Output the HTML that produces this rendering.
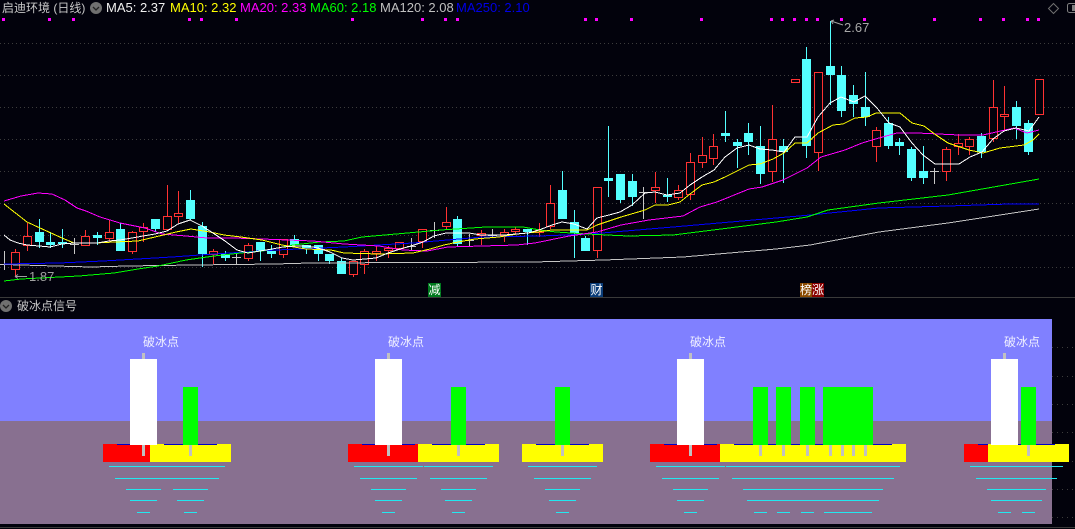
<!DOCTYPE html>
<html lang="zh">
<head>
<meta charset="utf-8">
<style>
html,body{margin:0;padding:0;width:1075px;height:529px;overflow:hidden;background:#02020c}
svg{display:block;position:absolute;left:0;top:0}
text{font-family:"Liberation Sans","Noto Sans CJK SC",sans-serif}
</style>
</head>
<body>
<svg width="1075" height="529" viewBox="0 0 1075 529" xmlns="http://www.w3.org/2000/svg">
<rect width="1075" height="529" fill="#02020c"/>

<!-- grid -->
<path d="M0 43.5H1075M0 75.5H1075M0 107.5H1075M0 139.5H1075M0 171.5H1075M0 203.5H1075M0 235.5H1075M0 267.5H1075" stroke="#3c3c3c" stroke-width="1" stroke-dasharray="1 3" fill="none"/>
<path d="M1052 347.5H1075M1052 376.5H1075M1052 404.5H1075M1052 432.5H1075M1052 461.5H1075M1052 489.5H1075M1052 517.5H1075" stroke="#3c3c3c" stroke-width="1" stroke-dasharray="1 4" fill="none"/>

<!-- separators -->
<rect x="0" y="297" width="1075" height="1" fill="#3a3a3a"/>
<rect x="0" y="527" width="1075" height="1" fill="#3a3a3a"/>

<!-- legend -->
<text x="2" y="12" font-size="12" fill="#c8c8c8">启迪环境 (日线)</text>
<circle cx="96" cy="8" r="6" fill="#707070"/>
<path d="M93 7l3 3 3-3" stroke="#222" stroke-width="1.3" fill="none"/>
<text x="106" y="12" font-size="13" fill="#f0f0f0">MA5: 2.37</text>
<text x="170" y="12" font-size="13" fill="#ffff00">MA10: 2.32</text>
<text x="240" y="12" font-size="13" fill="#ff00ff">MA20: 2.33</text>
<text x="310" y="12" font-size="13" fill="#00ff00">MA60: 2.18</text>
<text x="380" y="12" font-size="13" fill="#c0c0c0">MA120: 2.08</text>
<text x="456" y="12" font-size="13" fill="#0000e6">MA250: 2.10</text>
<path d="M1053.5 3.5l5 5-5 5-5-5z" stroke="#707070" fill="none"/>
<rect x="1067.5" y="3.5" width="12" height="9" rx="2" stroke="#808080" fill="none"/>
<rect x="1072" y="5" width="4" height="6" fill="#808080"/>

<!-- pink markers -->
<path fill="#ff00ff" d="M2 18h3v3h-3zM48 18h3v3h-3zM72 18h3v3h-3zM188 18h3v3h-3zM200 18h3v3h-3zM235 18h3v3h-3zM351 18h3v3h-3zM421 18h3v3h-3zM444 18h3v3h-3zM456 18h3v3h-3zM584 18h3v3h-3zM595 18h3v3h-3zM630 18h3v3h-3zM700 18h3v3h-3zM770 18h3v3h-3zM781 18h3v3h-3zM793 18h3v3h-3zM805 18h3v3h-3zM816 18h3v3h-3zM840 18h3v3h-3zM863 18h3v3h-3zM933 18h3v3h-3zM979 18h3v3h-3zM1002 18h3v3h-3zM1026 18h3v3h-3zM1037 18h3v3h-3z"/>

<!-- doji -->
<path stroke="#c8c8c8" stroke-width="1" fill="none" d="M4.5 251V270M0 264.5H9M74.5 238V254M70 244.5H79M236.5 253V264M232 257.5H241M411.5 238V251M407 246.5H416M434.5 222V238M430 230.5H439M469.5 234V246M465 240.5H474M492.5 229V238M488 235.5H497M643.5 187V219M639 192.5H648M934.5 168V184M930 171.5H939"/>

<!-- cyan wicks -->
<path stroke="#54ffff" stroke-width="1" fill="none" d="M39.5 219V248M50.5 232V248M62.5 229V248M97.5 232V245M120.5 223V251M155.5 219V232M190.5 190V220M202.5 222V267M225.5 251V261M260.5 242V261M271.5 245V258M294.5 235V247M306.5 245V254M318.5 245V261M329.5 254V264M341.5 258V274M457.5 216V247M527.5 229V245M562.5 171V219M574.5 210V258M585.5 236V251M608.5 126V197M620.5 174V203M632.5 174V206M667.5 178V202M725.5 111V142M737.5 139V168M748.5 123V155M760.5 126V184M783.5 139V183M806.5 47V158M830.5 21V105M841.5 66V117M853.5 85V117M865.5 72V126M888.5 117V149M899.5 138V155M911.5 147V181M923.5 146V184M981.5 133V158M1016.5 101V139M1028.5 120V155"/>
<!-- cyan bodies -->
<path fill="#54ffff" d="M35 232h9v10h-9zM46 242h9v3h-9zM58 242h9v2h-9zM93 235h9v3h-9zM116 229h9v22h-9zM151 219h9v10h-9zM186 200h9v19h-9zM198 226h9v28h-9zM221 254h9v4h-9zM256 242h9v9h-9zM267 251h9v3h-9zM290 239h9v6h-9zM302 245h9v3h-9zM314 245h9v9h-9zM325 254h9v7h-9zM337 261h9v13h-9zM453 219h9v25h-9zM523 229h9v3h-9zM558 190h9v29h-9zM570 222h9v11h-9zM581 238h9v13h-9zM604 178h9v3h-9zM616 174h9v26h-9zM628 181h9v16h-9zM663 195h9v2h-9zM721 133h9v3h-9zM733 142h9v4h-9zM744 133h9v9h-9zM756 146h9v28h-9zM779 146h9v6h-9zM802 59h9v87h-9zM826 66h9v9h-9zM837 75h9v36h-9zM849 95h9v9h-9zM861 107h9v10h-9zM884 123h9v23h-9zM895 142h9v4h-9zM907 149h9v29h-9zM919 171h9v7h-9zM977 136h9v16h-9zM1012 107h9v19h-9zM1024 123h9v29h-9z"/>

<!-- red wicks -->
<path stroke="#ff3232" stroke-width="1" fill="none" d="M15.5 249V276M27.5 223V251M85.5 230V246M109.5 220V241M132.5 231V254M143.5 223V242M167.5 185V230M178.5 191V223M213.5 249V264M248.5 243V261M283.5 239V258M353.5 261V277M364.5 249V274M376.5 246V261M388.5 246V258M399.5 242V250M422.5 229V248M446.5 207V230M481.5 230V245M504.5 229V242M515.5 227V234M539.5 223V237M550.5 185V229M597.5 187V258M655.5 172V203M678.5 185V200M690.5 153V200M702.5 137V168M713.5 134V165M772.5 105V182M818.5 72V171M876.5 127V162M946.5 147V181M958.5 134V155M969.5 137V155M993.5 80V142M1004.5 86V130"/>
<!-- red bodies -->
<path stroke="#ff3232" stroke-width="1" fill="#02020c" d="M11.5 252.5h8V269.5h-8zM23.5 236.5h8V245.5h-8zM81.5 236.5h8V245.5h-8zM105.5 232.5h8V238.5h-8zM128.5 232.5h8V251.5h-8zM139.5 227.5h8V231.5h-8zM163.5 216.5h8V229.5h-8zM174.5 213.5h8V216.5h-8zM209.5 251.5h8V254.5h-8zM244.5 245.5h8V258.5h-8zM279.5 239.5h8V254.5h-8zM349.5 261.5h8V274.5h-8zM360.5 251.5h8V264.5h-8zM372.5 251.5h8V253.5h-8zM384.5 248.5h8V250.5h-8zM395.5 242.5h8V248.5h-8zM418.5 229.5h8V241.5h-8zM442.5 222.5h8V226.5h-8zM477.5 233.5h8V235.5h-8zM500.5 232.5h8V235.5h-8zM511.5 229.5h8V231.5h-8zM535.5 230.5h8V232.5h-8zM546.5 203.5h8V226.5h-8zM593.5 187.5h8V250.5h-8zM651.5 187.5h8V190.5h-8zM674.5 190.5h8V197.5h-8zM686.5 162.5h8V194.5h-8zM698.5 155.5h8V162.5h-8zM709.5 146.5h8V158.5h-8zM768.5 139.5h8V171.5h-8zM791.5 79.5h8V82.5h-8zM814.5 72.5h8V152.5h-8zM872.5 130.5h8V146.5h-8zM942.5 149.5h8V171.5h-8zM954.5 143.5h8V146.5h-8zM965.5 139.5h8V146.5h-8zM989.5 107.5h8V138.5h-8zM1000.5 114.5h8V116.5h-8zM1035.5 79.5h8V114.5h-8z"/>

<!-- MA lines -->
<g fill="none" stroke-width="1" stroke-linejoin="round" shape-rendering="crispEdges">
<polyline stroke="#c4c4c4" points="4,264.5 55,266 91,267 127,266 193,265 275,264 310,263 534,262 604,260 683,257 776,249 810,245 879,232 948,223 1039,209"/>
<polyline stroke="#0000ff" points="4,264 59,263 103,261 172,257 214,254 276,250 344,247 413,243 482,237 540,236 590,234 673,227 742,221 810,215 879,208 948,206 1010,204 1039,204"/>
<polyline stroke="#00ff00" points="4,281 21,279 79,276 114,273 138,269 158,266 186,260 214,256 241,253 262,251 293,245 320,242 344,241 362,237 396,234 441,230 486,227 523,227 540,230 556,232 587,234 628,236 673,235 721,229 776,222 807,217 828,210 879,203 948,195 1039,179"/>
<polyline stroke="#ff00ff" points="4,201 21,196 38,193 52,194 65,200 77,208 86,211 100,217 120,223 145,228 162,234 186,236 207,238 234,238 262,239 313,241 344,244 379,246 403,250 427,251 448,247 482,246 517,245 535,243 569,236 597,232 621,225 649,220 683,216 700,207 717,202 749,189 762,187 783,180 807,168 821,157 845,150 862,143 879,138 897,133 917,133 959,135 983,135 1014,128 1027,133 1039,130"/>
<polyline stroke="#ffff00" points="4,204 27,222 40,228 62,238 74,243 96,243 114,242 138,241 155,237 176,232 191,229 210,232 224,235 241,237 262,240 282,245 306,249 331,250 344,253 379,254 413,253 430,249 444,245 458,242 475,239 499,237 517,234 537,232 552,230 587,230 597,225 621,217 645,210 655,205 668,205 680,202 690,194 702,185 714,182 725,177 749,165 760,164 773,159 784,153 795,143 807,143 818,133 833,125 843,124 855,118 867,117 876,113 900,113 912,123 924,126 936,135 948,143 969,150 983,153 1000,148 1024,145 1033,140 1039,134"/>
<polyline stroke="#ffffff" points="4,235 10,240 18,243 27,245 39,246 50,247 62,244 74,243 86,243 97,243 109,241 120,240 132,238 143,236 155,234 167,231 178,224 190,220 202,226 213,233 225,241 237,250 248,253 260,251 272,249 283,247 295,246 307,246 318,248 330,252 342,258 353,260 365,259 376,258 388,253 400,249 411,246 423,242 434,236 446,233 458,233 469,233 481,235 493,235 504,235 516,234 528,233 539,230 552,225 562,222 574,224 587,229 597,218 609,215 620,212 632,205 645,193 655,192 667,195 680,193 690,185 702,177 714,170 725,157 737,148 749,145 760,149 772,150 784,152 795,137 807,137 818,117 830,103 841,97 854,102 865,96 877,108 889,123 900,127 912,143 923,155 935,164 959,164 970,157 982,152 993,139 1004,131 1016,128 1029,131 1039,117"/>
</g>

<!-- hi/lo labels -->
<path d="M15 276.5H27M15 276.5l3-2M15 276.5l3 2" stroke="#a0a0a0" fill="none"/>
<text x="29" y="281" font-size="13" fill="#a0a0a0">1.87</text>
<path d="M831 21l12 4M831 21l3-1M831 21l2 3" stroke="#a0a0a0" fill="none"/>
<text x="844" y="32" font-size="13" fill="#a8a8a8">2.67</text>

<!-- tag markers -->
<rect x="428" y="283" width="13" height="14" fill="#007a1e"/>
<text x="428.5" y="294" font-size="12" fill="#fff">减</text>
<rect x="590" y="283" width="13" height="14" fill="#0a3c78"/>
<text x="590.5" y="294" font-size="12" fill="#fff">财</text>
<rect x="800" y="283" width="12" height="14" fill="#8a4a00"/>
<text x="800" y="294" font-size="12" fill="#fff">榜</text>
<rect x="812" y="283" width="12" height="14" fill="#8a0000"/>
<text x="812" y="294" font-size="12" fill="#fff">涨</text>

<!-- lower panel header -->
<circle cx="6" cy="306" r="6" fill="#707070"/>
<path d="M3 305l3 3 3-3" stroke="#222" stroke-width="1.3" fill="none"/>
<text x="17" y="310" font-size="12" fill="#c8c8c8">破冰点信号</text>

<!-- lower panel -->
<rect x="0" y="319" width="1052" height="102" fill="#8080ff"/>
<rect x="0" y="421" width="1052" height="103" fill="#887090"/>

<!-- bases -->
<g fill="#ff0000">
<rect x="103" y="444" width="47" height="18"/>
<rect x="348" y="444" width="70" height="18"/>
<rect x="650" y="444" width="70" height="18"/>
<rect x="964" y="444" width="24" height="18"/>
</g>
<g fill="#ffff00">
<rect x="150" y="444" width="81" height="18"/>
<rect x="418" y="444" width="81" height="18"/>
<rect x="522" y="444" width="81" height="18"/>
<rect x="720" y="444" width="186" height="18"/>
<rect x="988" y="444" width="81" height="18"/>
</g>
<g fill="#0000c8">
<rect x="117" y="444" width="100" height="1"/>
<rect x="362" y="444" width="123" height="1"/>
<rect x="536" y="444" width="53" height="1"/>
<rect x="664" y="444" width="228" height="1"/>
<rect x="978" y="444" width="77" height="1"/>
</g>
<rect x="150" y="444" width="14" height="1" fill="#ffff00"/>
<rect x="415" y="444" width="3" height="1" fill="#ff0000"/>
<rect x="418" y="444" width="14" height="1" fill="#ffff00"/>
<rect x="717" y="444" width="3" height="1" fill="#ff0000"/>
<rect x="720" y="444" width="14" height="1" fill="#ffff00"/>
<rect x="988" y="444" width="14" height="1" fill="#ffff00"/>

<!-- white bars -->
<g fill="#ffffff">
<rect x="130" y="359" width="27" height="86"/>
<rect x="375" y="359" width="27" height="86"/>
<rect x="677" y="359" width="27" height="86"/>
<rect x="991" y="359" width="27" height="86"/>
</g>
<!-- green bars -->
<g fill="#00ff00">
<rect x="183" y="387" width="15" height="58"/>
<rect x="451" y="387" width="15" height="58"/>
<rect x="555" y="387" width="15" height="58"/>
<rect x="753" y="387" width="15" height="58"/>
<rect x="776" y="387" width="15" height="58"/>
<rect x="800" y="387" width="15" height="58"/>
<rect x="823" y="387" width="50" height="58"/>
<rect x="1021" y="387" width="15" height="58"/>
</g>
<!-- gray stems -->
<g fill="#c0c0c0">
<rect x="142" y="353" width="3" height="6"/>
<rect x="387" y="353" width="3" height="6"/>
<rect x="689" y="353" width="3" height="6"/>
<rect x="1003" y="353" width="3" height="6"/>
<rect x="142" y="445" width="3" height="11"/>
<rect x="189" y="445" width="3" height="11"/>
<rect x="387" y="445" width="3" height="11"/>
<rect x="457" y="445" width="3" height="11"/>
<rect x="561" y="445" width="3" height="11"/>
<rect x="689" y="445" width="3" height="11"/>
<rect x="759" y="445" width="3" height="11"/>
<rect x="782" y="445" width="3" height="11"/>
<rect x="806" y="445" width="3" height="11"/>
<rect x="829" y="445" width="3" height="11"/>
<rect x="841" y="445" width="3" height="11"/>
<rect x="852" y="445" width="3" height="11"/>
<rect x="864" y="445" width="3" height="11"/>
<rect x="1027" y="445" width="3" height="11"/>
</g>

<!-- ripples -->
<path stroke="#22e8f0" stroke-width="1" fill="none" d="M109 466.5H225M115 478.5H219M126 489.5H161M173 489.5H208M130 500.5H157M177 500.5H204M137 512.5H150M184 512.5H197
M354 466.5H423M424 466.5H493M360 478.5H417M430 478.5H487M371 489.5H406M441 489.5H476M375 500.5H402M445 500.5H472M382 512.5H395M452 512.5H465
M528 466.5H597M534 478.5H591M545 489.5H580M549 500.5H576M556 512.5H569
M656 466.5H725M726 466.5H900M662 478.5H719M732 478.5H894M673 489.5H708M743 489.5H883M677 500.5H704M747 500.5H879M684 512.5H697M754 512.5H767M777 512.5H790M801 512.5H814M824 512.5H872
M970 466.5H1063M976 478.5H1057M987 489.5H1046M991 500.5H1042M998 512.5H1011M1022 512.5H1035"/>

<!-- labels -->
<g font-size="12" fill="#f0f0ff">
<text x="143" y="346">破冰点</text>
<text x="388" y="346">破冰点</text>
<text x="690" y="346">破冰点</text>
<text x="1004" y="346">破冰点</text>
</g>
</svg>
</body>
</html>
